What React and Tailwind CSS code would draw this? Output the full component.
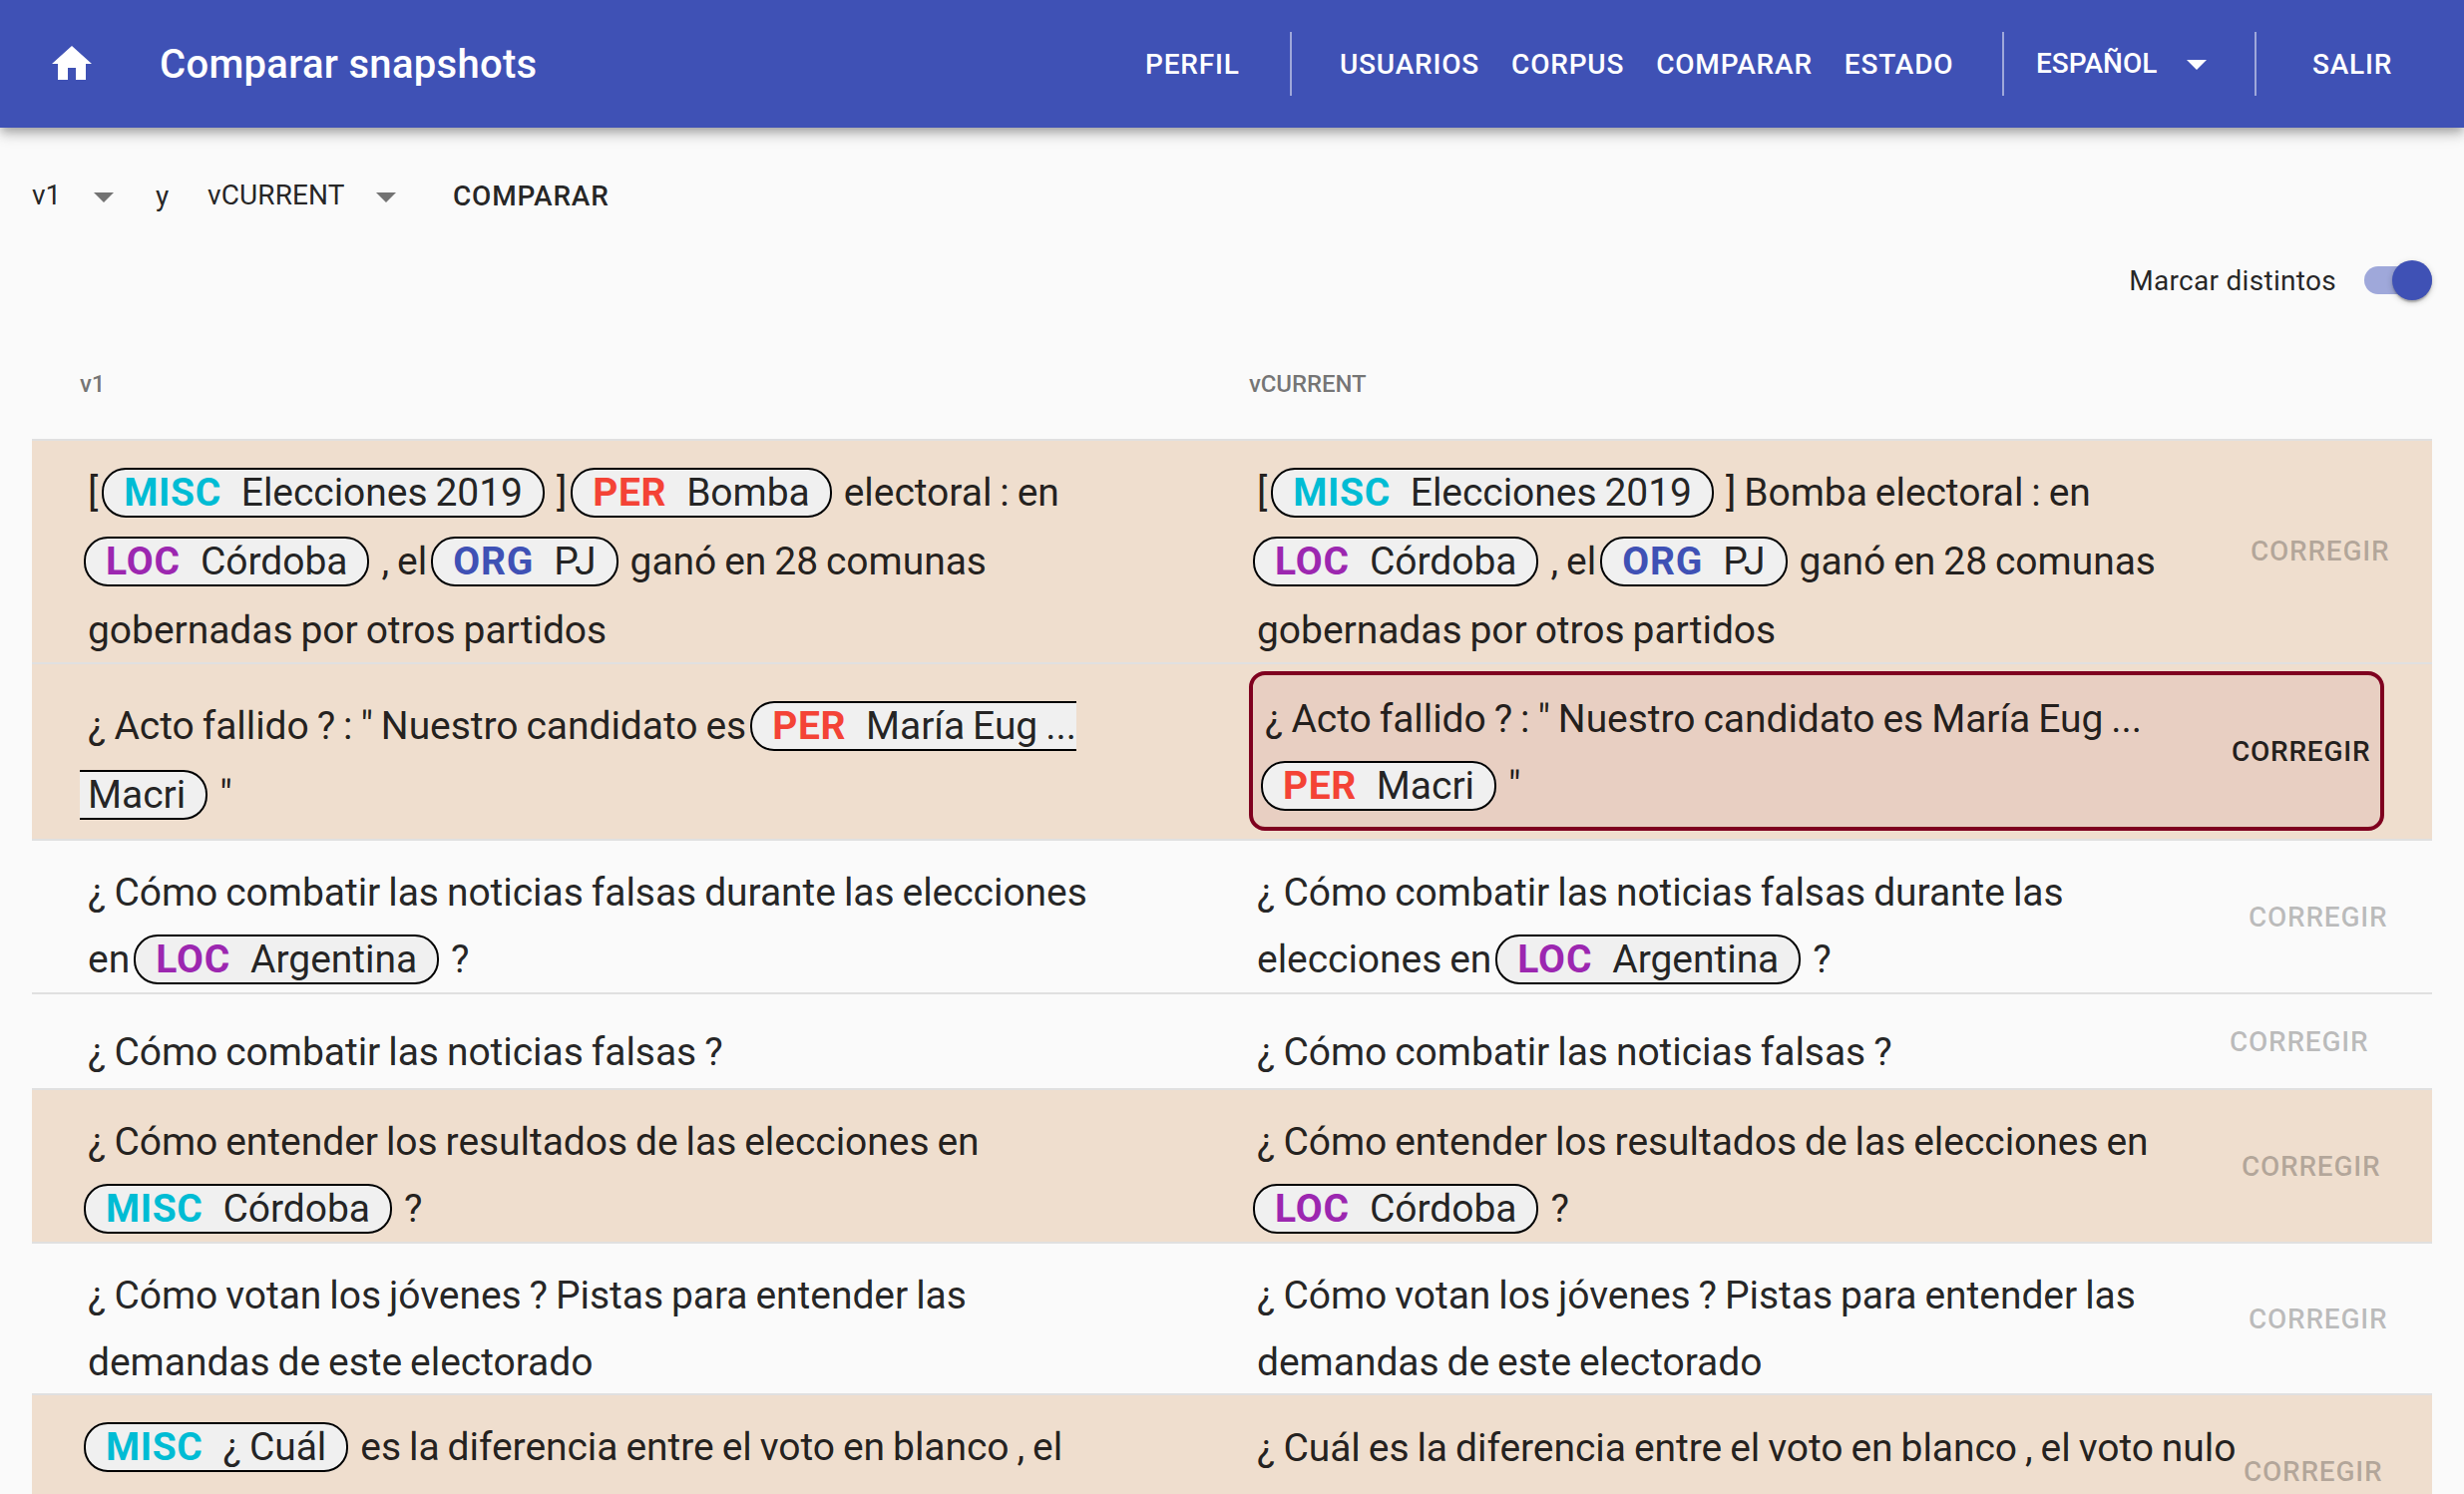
import React from "react";

const TAG_STYLES = {
  MISC: "text-[#00bcd4] tracking-[0.6px]",
  PER: "text-[#f44336] tracking-[0.6px]",
  LOC: "text-[#9c27b0] tracking-[0.9px]",
  ORG: "text-[#3f51b5] tracking-[0.9px]",
};

const DIFF = "bg-[#efdece]";

function T({ children }) {
  return <span className="pl-2 tracking-[-0.05px] [word-spacing:-1.65px]">{children}</span>;
}

function Entity({ tag, children }) {
  return (
    <span className="mx-1 rounded-[24px] border-2 border-black bg-[#f0f0f0] px-5">
      <span className={`${TAG_STYLES[tag]} mr-3 font-bold`}>{tag}</span>
      {children}
    </span>
  );
}

function Line({ children }) {
  return <div className="whitespace-nowrap">{children}</div>;
}

function Caret({ className }) {
  return (
    <svg viewBox="0 0 24 24" className={`size-12 shrink-0 fill-current ${className}`}>
      <path d="M7 10l5 5 5-5z" />
    </svg>
  );
}

function Fix({ className, active }) {
  return (
    <button
      className={`h-10 shrink-0 text-[28px] leading-[40px] font-medium tracking-[0.75px] ${
        active ? "text-black/87" : "text-black/26"
      } ${className}`}
    >
      CORREGIR
    </button>
  );
}

function Row({ className, left, leftClass, children }) {
  return (
    <div className={`flex items-start overflow-hidden border-t-2 border-[#e0e0e0] ${className}`}>
      <div className={`w-[1220px] shrink-0 pl-12 ${leftClass}`}>{left}</div>
      {children}
    </div>
  );
}

function NavDivider() {
  return <div className="h-16 w-[2px] shrink-0 bg-white/50" />;
}

function Header() {
  return (
    <header className="relative flex h-32 shrink-0 items-center bg-[#3f51b5] pl-12 text-white shadow-[0_4px_8px_-2px_rgba(0,0,0,0.2),0_8px_10px_0_rgba(0,0,0,0.14),0_2px_20px_0_rgba(0,0,0,0.12)]">
      <svg viewBox="0 0 24 24" className="size-12 fill-current">
        <path d="M10 20v-6h4v6h5v-8h3L12 3 2 12h3v8z" />
      </svg>
      <h1 className="ml-16 w-[988px] pt-[2px] text-[40px] leading-[64px] font-medium tracking-[0.3px]">
        Comparar snapshots
      </h1>
      <nav className="flex items-center text-[28px] leading-[48px] font-medium tracking-[0.8px]">
        <a className="w-[145px] pt-[2px]">PERFIL</a>
        <NavDivider />
        <div className="ml-[48px] flex w-[664px] gap-8 pt-[2px]">
          <a>USUARIOS</a>
          <a>CORPUS</a>
          <a>COMPARAR</a>
          <a>ESTADO</a>
        </div>
        <NavDivider />
        <div className="ml-8 flex w-[219px] items-center tracking-normal">
          <span className="w-[137px]">ESPAÑOL</span>
          <Caret className="" />
        </div>
        <NavDivider />
        <a className="ml-14 pt-[2px]">SALIR</a>
      </nav>
    </header>
  );
}

export default function App() {
  return (
    <div className="flex h-screen flex-col overflow-hidden bg-[#fafafa] font-[Roboto,sans-serif] text-black/87">
      <Header />

      <div className="mt-[45px] flex h-12 shrink-0 items-start pl-8 text-[28px] leading-[40px]">
        <span className="mt-[3px] w-12">v1</span>
        <Caret className="text-black/54" />
        <span className="mt-1 ml-7 w-[52px]">y</span>
        <span className="mt-[3px] w-[155px] tracking-[0.12px]">vCURRENT</span>
        <Caret className="text-black/54" />
        <button className="mt-1 ml-[43px] leading-[40px] font-medium tracking-[0.8px]">COMPARAR</button>
      </div>

      <div className="mt-10 flex h-10 shrink-0 items-center justify-end pr-8">
        <span className="mr-7 pt-[2px] text-[28px] leading-[40px] tracking-[0.3px]">Marcar distintos</span>
        <div className="flex h-7 w-[68px] items-center justify-end rounded-full bg-[#9fa8da]">
          <div className="size-10 shrink-0 rounded-full bg-[#3f51b5] shadow-[0_2px_6px_0_rgba(0,0,0,0.2),0_2px_2px_0_rgba(0,0,0,0.14),0_4px_2px_-2px_rgba(0,0,0,0.12)]" />
        </div>
      </div>

      <div className="mx-8 mt-[68px] flex h-[71px] shrink-0 pl-12 text-[24px] leading-8 font-medium tracking-[-0.1px] text-black/54">
        <span className="w-[1172px]">v1</span>
        <span>vCURRENT</span>
      </div>

      <div className="mx-8 text-[39px] leading-[67px]">
        <Row
          className={`h-[224px] leading-[69px] ${DIFF}`}
          leftClass="pt-[18px]"
          left={
            <>
              <Line><T>[</T><Entity tag="MISC"><T>Elecciones 2019</T></Entity><T>]</T><Entity tag="PER"><T>Bomba</T></Entity><T>electoral : en</T></Line>
              <Line><Entity tag="LOC"><T>Córdoba</T></Entity><T>, el</T><Entity tag="ORG"><T>PJ</T></Entity><T>ganó en 28 comunas</T></Line>
              <Line><T>gobernadas por otros partidos</T></Line>
            </>
          }
        >
          <div className="w-[1004px] pt-[18px]">
            <Line><T>[</T><Entity tag="MISC"><T>Elecciones 2019</T></Entity><T>] Bomba electoral : en</T></Line>
            <Line><Entity tag="LOC"><T>Córdoba</T></Entity><T>, el</T><Entity tag="ORG"><T>PJ</T></Entity><T>ganó en 28 comunas</T></Line>
            <Line><T>gobernadas por otros partidos</T></Line>
          </div>
          <Fix className="mt-[91px]" />
        </Row>

        <Row
          className={`h-[177px] ${DIFF}`}
          leftClass="pt-[28px] leading-[69px]"
          left={
            <Line>
              <T>¿ Acto fallido ? : " Nuestro candidato es</T>
              <Entity tag="PER"><T>María Eug ...</T><br /><T>Macri</T></Entity>
              <T>"</T>
            </Line>
          }
        >
          <div className="mt-[7px] flex h-40 w-[1138px] items-start rounded-2xl border-4 border-[#7f001f] bg-[#e8cfc2]">
            <div className="w-[981px] pt-[11px] pl-1">
              <Line><T>¿ Acto fallido ? : " Nuestro candidato es María Eug ...</T></Line>
              <Line><Entity tag="PER"><T>Macri</T></Entity><T>"</T></Line>
            </div>
            <Fix active className="mt-[57px]" />
          </div>
        </Row>

        <Row
          className="h-[154px]"
          leftClass="pt-[19px]"
          left={
            <>
              <Line><T>¿ Cómo combatir las noticias falsas durante las elecciones</T></Line>
              <Line><T>en</T><Entity tag="LOC"><T>Argentina</T></Entity><T>?</T></Line>
            </>
          }
        >
          <div className="w-[1002px] pt-[19px]">
            <Line><T>¿ Cómo combatir las noticias falsas durante las</T></Line>
            <Line><T>elecciones en</T><Entity tag="LOC"><T>Argentina</T></Entity><T>?</T></Line>
          </div>
          <Fix className="mt-[57px]" />
        </Row>

        <Row
          className="h-[96px]"
          leftClass="pt-[25px]"
          left={<Line><T>¿ Cómo combatir las noticias falsas ?</T></Line>}
        >
          <div className="w-[983px] pt-[25px]">
            <Line><T>¿ Cómo combatir las noticias falsas ?</T></Line>
          </div>
          <Fix className="mt-7" />
        </Row>

        <Row
          className={`h-[154px] ${DIFF}`}
          leftClass="pt-[19px]"
          left={
            <>
              <Line><T>¿ Cómo entender los resultados de las elecciones en</T></Line>
              <Line><Entity tag="MISC"><T>Córdoba</T></Entity><T>?</T></Line>
            </>
          }
        >
          <div className="w-[995px] pt-[19px]">
            <Line><T>¿ Cómo entender los resultados de las elecciones en</T></Line>
            <Line><Entity tag="LOC"><T>Córdoba</T></Entity><T>?</T></Line>
          </div>
          <Fix className="mt-[57px]" />
        </Row>

        <Row
          className="h-[152px]"
          leftClass="pt-[19px]"
          left={
            <>
              <Line><T>¿ Cómo votan los jóvenes ? Pistas para entender las</T></Line>
              <Line><T>demandas de este electorado</T></Line>
            </>
          }
        >
          <div className="w-[1002px] pt-[19px]">
            <Line><T>¿ Cómo votan los jóvenes ? Pistas para entender las</T></Line>
            <Line><T>demandas de este electorado</T></Line>
          </div>
          <Fix className="mt-14" />
        </Row>

        <Row
          className={`h-[154px] ${DIFF}`}
          leftClass="pt-[19px]"
          left={<Line><Entity tag="MISC"><T>¿ Cuál</T></Entity><T>es la diferencia entre el voto en blanco , el</T></Line>}
        >
          <div className="w-[997px] pt-5">
            <Line><T>¿ Cuál es la diferencia entre el voto en blanco , el voto nulo</T></Line>
          </div>
          <Fix className="mt-[57px]" />
        </Row>
      </div>
    </div>
  );
}
